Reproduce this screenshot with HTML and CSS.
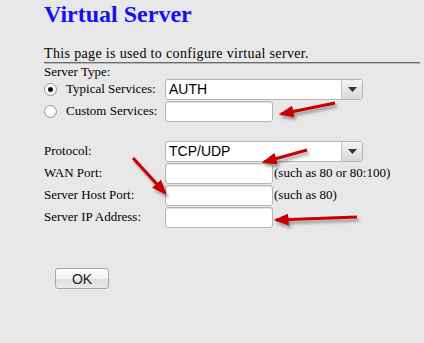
FILE: index.html
```html
<!DOCTYPE html>
<html lang="en">
<head>
  <meta charset="UTF-8" />
  <title>Virtual Server</title>
  <link rel="stylesheet" href="styles.css">
</head>
<body>
  <div class="page">
    <h1 class="title">Virtual Server</h1>
    <p class="intro">This page is used to configure virtual server.</p>

    <div class="form">
      <div class="row">
        <span class="label">Server Type:</span>
      </div>
      <div class="row">
        <label class="label radio-label"><span class="radio checked"></span>Typical Services:</label>
        <div class="select wide"><span class="select-value">AUTH</span><span class="select-btn"><svg width="9" height="5" viewBox="0 0 9 5"><path d="M0 0h9L4.5 5z" fill="#333"/></svg></span></div>
      </div>
      <div class="row">
        <label class="label radio-label"><span class="radio"></span>Custom Services:</label>
        <span class="input"></span>
      </div>

      <div class="row spacer"></div>

      <div class="row">
        <span class="label">Protocol:</span>
        <div class="select wide"><span class="select-value">TCP/UDP</span><span class="select-btn"><svg width="9" height="5" viewBox="0 0 9 5"><path d="M0 0h9L4.5 5z" fill="#333"/></svg></span></div>
      </div>
      <div class="row">
        <span class="label">WAN Port:</span>
        <span class="input"></span>
        <span class="hint">(such as 80 or 80:100)</span>
      </div>
      <div class="row">
        <span class="label">Server Host Port:</span>
        <span class="input"></span>
        <span class="hint">(such as 80)</span>
      </div>
      <div class="row">
        <span class="label">Server IP Address:</span>
        <span class="input"></span>
      </div>
    </div>

    <div class="actions">
      <button class="btn">OK</button>
    </div>
  </div>

  <svg class="arrows" width="424" height="343" viewBox="0 0 424 343">
    <defs>
      <filter id="shadow" x="-20%" y="-20%" width="140%" height="160%">
        <feDropShadow dx="2" dy="3" stdDeviation="1.6" flood-color="#000" flood-opacity="0.35"/>
      </filter>
      <marker id="head" markerWidth="5" markerHeight="4" refX="4.2" refY="2" orient="auto" markerUnits="strokeWidth">
        <path d="M0 0L5 2L0 4z" fill="#c80000"/>
      </marker>
    </defs>
    <g stroke="#c80000" stroke-width="3" fill="none" filter="url(#shadow)" marker-end="url(#head)">
      <line x1="335" y1="103" x2="281" y2="114"/>
      <line x1="307" y1="150" x2="264" y2="162"/>
      <line x1="133" y1="158" x2="165" y2="193"/>
      <line x1="357" y1="217" x2="276" y2="220"/>
    </g>
  </svg>
</body>
</html>
```

FILE: styles.css
```css
body {
  margin: 0;
  background: #e8e8e8;
  font-family: "Liberation Serif", "Times New Roman", serif;
  font-size: 13px;
  color: #000;
}
.page {
  padding: 0 4px 0 44px;
}
.title {
  margin: 0;
  padding-top: 1px;
  font-size: 24px;
  font-weight: bold;
  color: #1212f2;
  line-height: 26px;
}
.intro {
  margin: 19px 0 0;
  font-size: 14px;
  letter-spacing: 0.35px;
  line-height: 16px;
  border-bottom: 1px solid #6a6a6a;
  box-shadow: 0 1px 0 #b8b8b8;
}
.row {
  display: flex;
  align-items: center;
  height: 22px;
}
.row:first-child {
  height: 14px;
  padding-top: 1px;
  align-items: flex-start;
}
.spacer {
  height: 18px;
}
.label {
  width: 121px;
  flex: none;
}
.radio-label {
  display: flex;
  align-items: center;
}
.radio {
  width: 11px;
  height: 11px;
  border: 1px solid #9a9a9a;
  border-radius: 50%;
  background: radial-gradient(circle at 40% 35%, #fff 0, #fff 40%, #e6e6e6 100%);
  margin-right: 9px;
  position: relative;
}
.radio.checked::after {
  content: "";
  position: absolute;
  left: 3px;
  top: 3px;
  width: 5px;
  height: 5px;
  border-radius: 50%;
  background: #111;
}
.input {
  box-sizing: border-box;
  width: 108px;
  height: 21px;
  background: #fff;
  border: 1px solid #b6b6b6;
  border-radius: 3px;
  box-shadow: inset 0 1px 1px #e0e0e0;
}
.hint {
  margin-left: 1px;
}
.select {
  box-sizing: border-box;
  width: 198px;
  height: 21px;
  display: flex;
  background: #fff;
  border: 1px solid #b6b6b6;
  border-radius: 3px;
  font-family: "Liberation Sans", Arial, sans-serif;
  font-size: 14px;
}
.select-value {
  flex: 1;
  padding-left: 3px;
  line-height: 19px;
}
.select-btn {
  width: 20px;
  display: flex;
  align-items: center;
  justify-content: center;
  border-left: 1px solid #c8c8c8;
  background: linear-gradient(#f4f4f4, #d8d8d8);
  border-radius: 0 2px 2px 0;
}
.actions {
  margin-top: 40px;
  padding-left: 11px;
}
.btn {
  width: 54px;
  height: 21px;
  padding: 0;
  font-family: "Liberation Sans", Arial, sans-serif;
  font-size: 14px;
  color: #222;
  border: 1px solid #a8a8a8;
  border-radius: 3px;
  background: linear-gradient(#fdfdfd 0, #f2f2f2 50%, #dedede 51%, #e8e8e8 100%);
}
.arrows {
  position: absolute;
  left: 0;
  top: 0;
  pointer-events: none;
}
```
